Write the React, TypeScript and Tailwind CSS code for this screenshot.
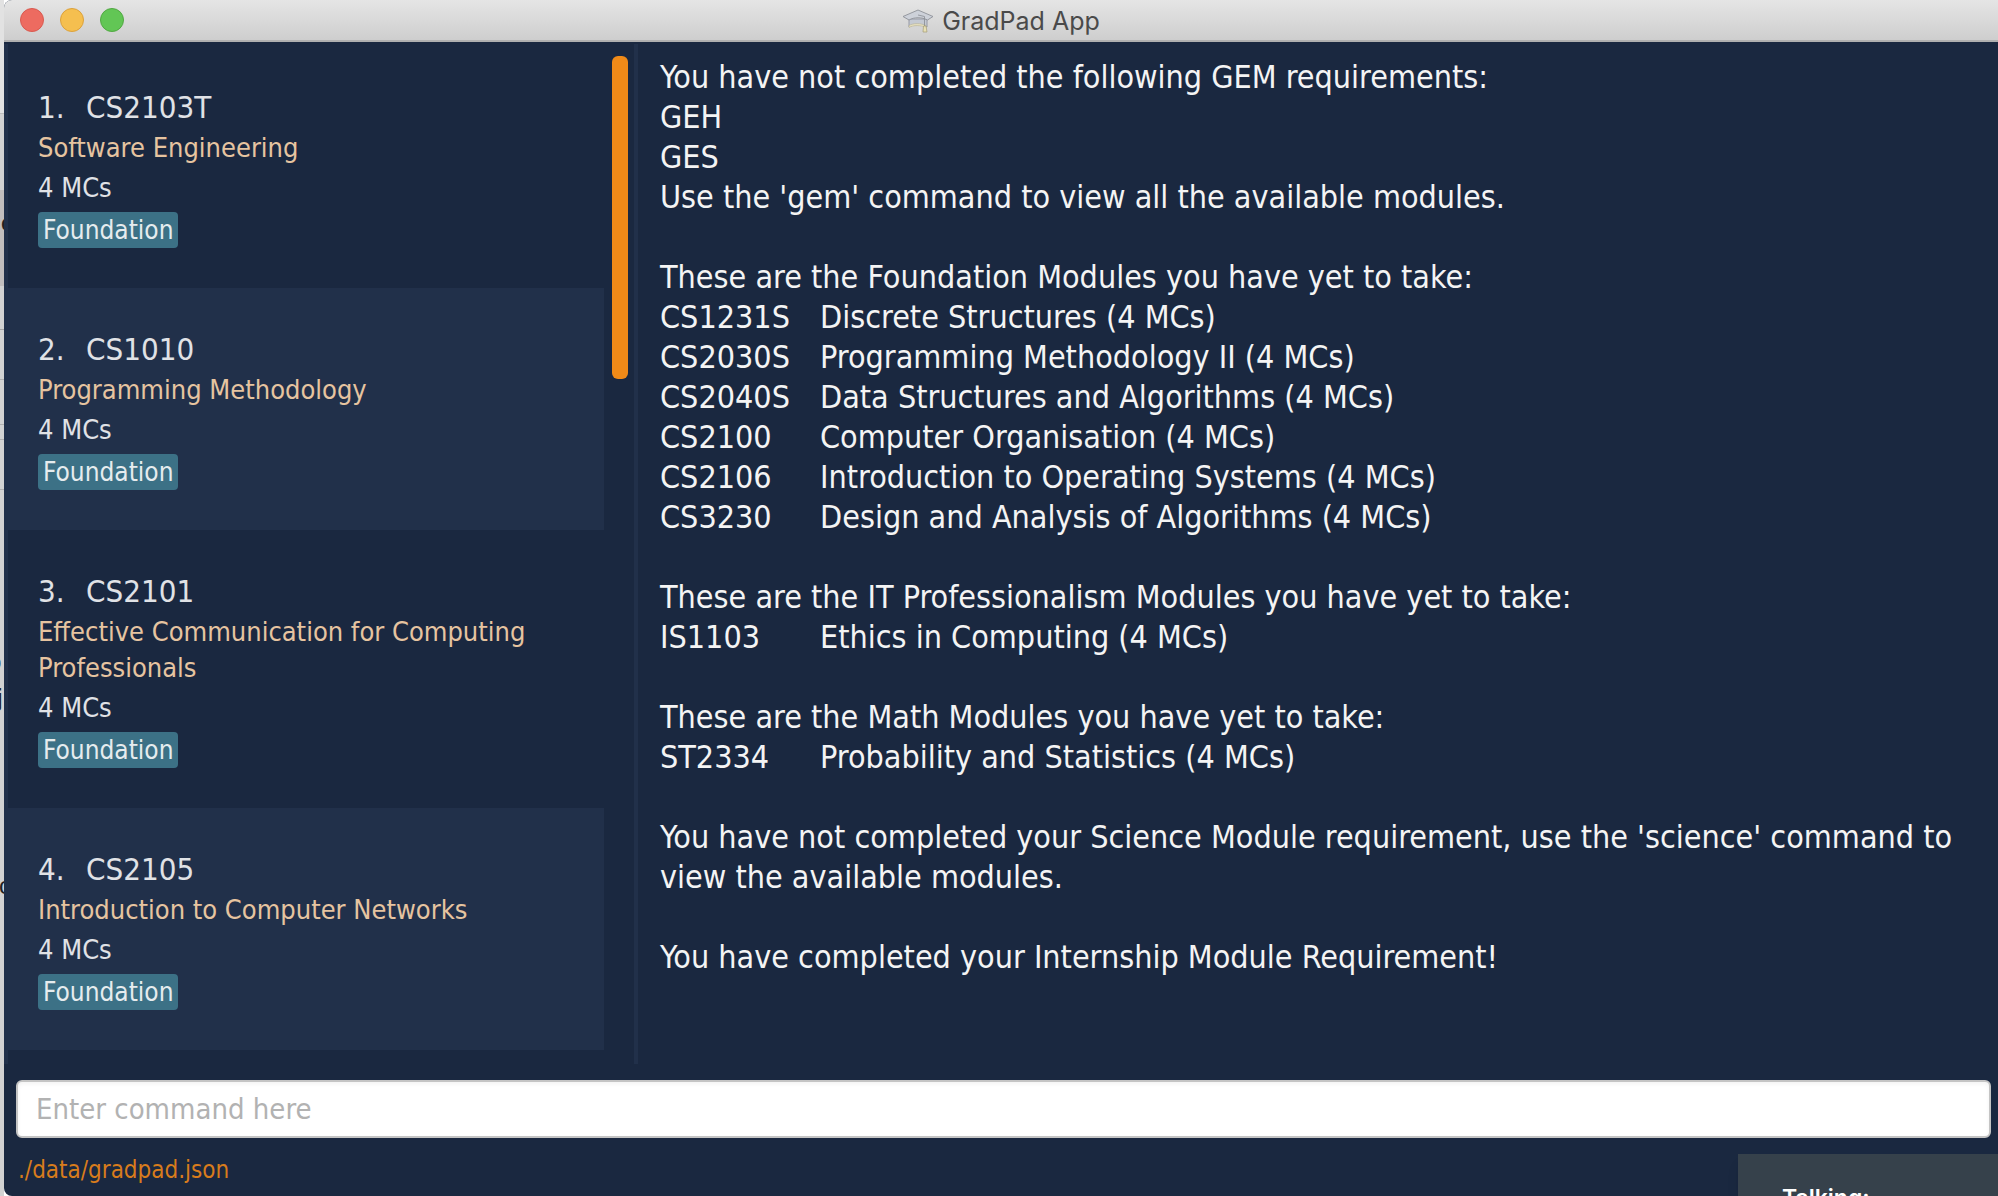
import React from "react";

type Module = { code: string; name: string; credits: number; tag: string };

const completed: Module[] = [
  { code: "CS2103T", name: "Software Engineering", credits: 4, tag: "Foundation" },
  { code: "CS1010", name: "Programming Methodology", credits: 4, tag: "Foundation" },
  { code: "CS2101", name: "Effective Communication for Computing Professionals", credits: 4, tag: "Foundation" },
  { code: "CS2105", name: "Introduction to Computer Networks", credits: 4, tag: "Foundation" },
];

const foundation: [string, string][] = [
  ["CS1231S", "Discrete Structures (4 MCs)"],
  ["CS2030S", "Programming Methodology II (4 MCs)"],
  ["CS2040S", "Data Structures and Algorithms (4 MCs)"],
  ["CS2100", "Computer Organisation (4 MCs)"],
  ["CS2106", "Introduction to Operating Systems (4 MCs)"],
  ["CS3230", "Design and Analysis of Algorithms (4 MCs)"],
];

function ModuleTable({ rows }: { rows: [string, string][] }) {
  return (
    <table className="border-collapse text-left">
      <tbody>
        {rows.map(([code, title]) => (
          <tr key={code}>
            <td className="w-40 p-0">{code}</td>
            <td className="p-0">{title}</td>
          </tr>
        ))}
      </tbody>
    </table>
  );
}

function CapIcon() {
  return (
    <svg viewBox="0 0 32 26" className="h-[26px] w-8" aria-hidden="true">
      <path d="M7 11v8c4-3 13-3 18 0v-8z" fill="#c5cad3" stroke="#9093a0" strokeWidth=".9" />
      <path d="M7 17.500c4-2.500 12-2.500 17 0v2c-5-2.500-13-2.500-17 0z" fill="#e6e0c0" stroke="#b0aa8c" strokeWidth=".5" />
      <path d="M16 2 31 8.500 25.500 12C20 9 12 9 7 12L1 8.500z" fill="#cdd1d9" stroke="#8f9299" strokeWidth=".9" strokeLinejoin="round" />
      <path d="M16 7l6.500 1.500V18" fill="none" stroke="#8f9299" strokeWidth=".9" />
      <path d="M21.500 18h2.500l1 6h-4z" fill="#e8e0b4" stroke="#a39c76" strokeWidth=".7" />
    </svg>
  );
}

/* Sliver of the document window that lies behind this one. */
function Backdrop() {
  return (
    <div aria-hidden="true" className="absolute inset-y-0 left-0 w-1 overflow-hidden bg-[#d2d2d2] font-['Liberation_Sans',sans-serif] text-2xl leading-6 text-[#222]">
      <div className="h-[114px] border-b border-[#bdbdbd] bg-[#e2e2e2]" />
      <div className="h-[76px]" />
      <div className="h-24 bg-[#c2bebe] pt-[21px] pl-px font-bold">e</div>
      <div className="h-11 border-b border-[#a5a5a5]" />
      <div className="h-[50px] border-b border-[#b0b0b0]" />
      <div className="h-[45px] border-b border-[#b0b0b0]" />
      <div className="h-[15px] border-b border-[#b0b0b0]" />
      <div className="h-[50px] border-b border-[#b0b0b0]" />
      <div className="-ml-3 pt-[160px]">o</div>
      <div className="-ml-1 pt-3 font-bold">j</div>
      <div className="-ml-px pt-[164px]">c</div>
    </div>
  );
}

export default function App() {
  return (
    <div className="relative flex h-screen overflow-hidden pl-1 font-['DejaVu_Sans_Condensed','DejaVu_Sans',sans-serif]">
      <Backdrop />
      <div className="z-10 flex min-w-0 flex-1 flex-col overflow-hidden rounded-tl-lg rounded-bl-lg bg-[#1a2840]">
        <header className="flex h-[42px] shrink-0 items-center border-b-2 border-[#b0b0b0] bg-linear-to-b from-[#e5e5e5] to-[#cecece] px-4">
          <div className="flex flex-1 gap-4">
            <button aria-label="Close" className="size-6 rounded-full border border-[#d85a50] bg-[#ed6b60]" />
            <button aria-label="Minimize" className="size-6 rounded-full border border-[#dba13c] bg-[#f5bf4f]" />
            <button aria-label="Zoom" className="size-6 rounded-full border border-[#52a843] bg-[#62c655]" />
          </div>
          <h1 className="flex items-center gap-2 pt-0.5 font-[Inter,sans-serif] text-[25px] leading-8 text-[#4a4a4a]">
            <CapIcon />
            GradPad App
          </h1>
          <div className="flex-1" />
        </header>

        <main className="flex min-h-0 flex-1 pt-0.5">
          <section aria-label="Completed modules" className="flex w-[634px] shrink-0 border-x-4 border-[#21304a]">
            <ol className="w-[596px] pt-0.5">
              {completed.map((m, i) => (
                <li key={m.code} className="flex flex-col items-start px-[30px] py-10 odd:bg-[#1a2840] even:bg-[#21304a]">
                  <h2 className="mb-0.5 flex text-[31px] leading-[42px] text-[#e0e2e6]">
                    <span className="w-12">{i + 1}.</span>
                    {m.code}
                  </h2>
                  <p className="mb-1 text-[27px] leading-9 text-[#e6c4a0]">{m.name}</p>
                  <p className="mb-1.5 text-[27px] leading-9 text-[#e0e2e6]">{m.credits} MCs</p>
                  <span className="rounded bg-[#3c7186] px-[5px] text-[26px] leading-9 text-[#e6ecee]">{m.tag}</span>
                </li>
              ))}
            </ol>
            <div role="presentation" className="mt-3 ml-2 h-[323px] w-4 rounded-md bg-[#f08a18]" />
          </section>

          <section aria-label="Result" className="min-w-0 flex-1 px-[22px] pt-[13px] text-[32px] leading-10 text-[#f4f4f4]">
            <p>You have not completed the following GEM requirements:</p>
            <p>GEH</p>
            <p>GES</p>
            <p className="mb-10">Use the 'gem' command to view all the available modules.</p>
            <p>These are the Foundation Modules you have yet to take:</p>
            <ModuleTable rows={foundation} />
            <p className="mt-10">These are the IT Professionalism Modules you have yet to take:</p>
            <ModuleTable rows={[["IS1103", "Ethics in Computing (4 MCs)"]]} />
            <p className="mt-10">These are the Math Modules you have yet to take:</p>
            <ModuleTable rows={[["ST2334", "Probability and Statistics (4 MCs)"]]} />
            <p className="mt-10">You have not completed your Science Module requirement, use the 'science' command to view the available modules.</p>
            <p className="mt-10">You have completed your Internship Module Requirement!</p>
          </section>
        </main>

        <form className="mt-4 shrink-0 pr-[7px] pl-3" onSubmit={(e) => e.preventDefault()}>
          <input
            aria-label="Command"
            placeholder="Enter command here"
            className="h-[58px] w-full rounded-md border-2 border-[#c4c4c4] bg-white px-[18px] text-[29px] text-black inset-shadow-sm placeholder:text-[#b2b2b2]"
          />
        </form>
        <footer className="h-[58px] shrink-0 px-3.5 pt-4 text-2xl leading-8 text-[#d87c1c]">./data/gradpad.json</footer>
      </div>

      <aside className="absolute right-0 bottom-0 z-20 h-[42px] w-[260px] overflow-hidden bg-[#36414b] px-11 pt-7 font-[Inter,sans-serif] text-[23px] leading-8 font-semibold text-white shadow-lg">
        Talking:
      </aside>
    </div>
  );
}
